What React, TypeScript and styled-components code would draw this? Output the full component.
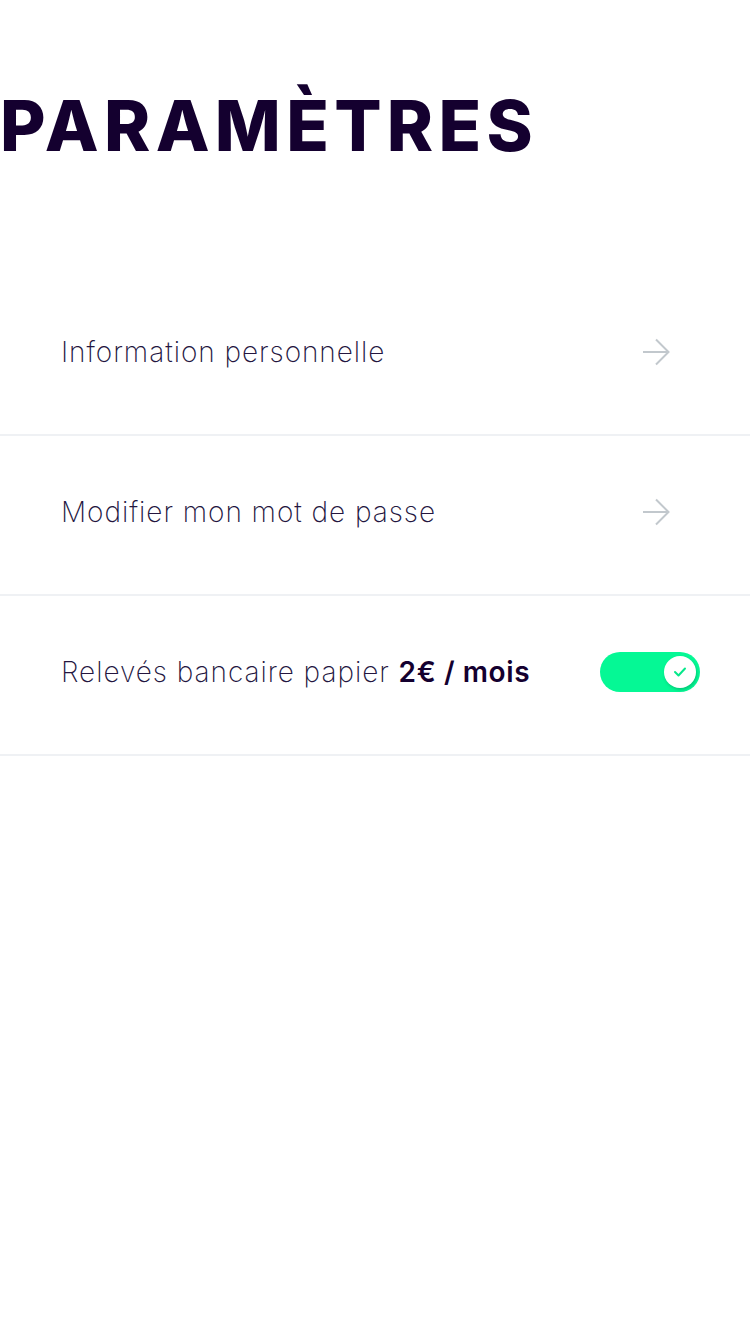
import React from "react";
import styled, { createGlobalStyle } from "styled-components";

const Global = createGlobalStyle`
  html, body { margin: 0; padding: 0; background: #ffffff; }
  body { font-family: Inter, "Noto Sans", sans-serif; }
  * { box-sizing: border-box; }
`;

const Page = styled.div`
  width: 750px;
  min-height: 1334px;
  background: #ffffff;
  display: flex;
  flex-direction: column;
`;

const Title = styled.h1`
  margin: 0;
  padding: 84px 0 0 0;
  height: 276px;
  font-family: Inter, "DejaVu Sans", sans-serif;
  font-weight: 800;
  font-size: 70px;
  line-height: 84px;
  letter-spacing: 5.3px;
  color: #14002f;
`;

const List = styled.ul`
  list-style: none;
  margin: 0;
  padding: 0;
`;

const Row = styled.li`
  height: 160px;
  display: flex;
  align-items: center;
  justify-content: space-between;
  padding: 0 50px 6px 61px;
  border-bottom: 2px solid #eff1f4;
`;

const Label = styled.span`
  font-family: Inter, sans-serif;
  font-weight: 250;
  font-size: 28px;
  letter-spacing: 0.95px;
  color: #24163f;
  strong {
    font-weight: 600;
    letter-spacing: 0.6px;
    color: #14002f;
  }
`;

const ArrowWrap = styled.span`
  display: flex;
  margin-right: 30px;
`;

const Toggle = styled.span`
  width: 100px;
  height: 40px;
  border-radius: 20px;
  background: #05f895;
  position: relative;
  display: inline-block;
`;

const Knob = styled.span`
  position: absolute;
  top: 4px;
  right: 4px;
  width: 32px;
  height: 32px;
  border-radius: 50%;
  background: #ffffff;
  box-shadow: 1px 2px 3px rgba(0, 120, 70, 0.35);
  display: flex;
  align-items: center;
  justify-content: center;
`;

const Arrow = () => (
  <svg width="28" height="28" viewBox="0 0 28 28" fill="none">
    <path d="M1 14 H26 M14 1.5 L26.5 14 L14 26.5" stroke="#c2c8cd" strokeWidth="2" />
  </svg>
);

const Check = () => (
  <svg width="14" height="12" viewBox="0 0 14 12" fill="none">
    <path d="M2 6 L5.5 9.5 L12 2.5" stroke="#05e88a" strokeWidth="2" strokeLinecap="round" strokeLinejoin="round" />
  </svg>
);

export default function App() {
  return (
    <Page>
      <Global />
      <Title>PARAMÈTRES</Title>
      <List>
        <Row>
          <Label>Information personnelle</Label>
          <ArrowWrap><Arrow /></ArrowWrap>
        </Row>
        <Row>
          <Label>Modifier mon mot de passe</Label>
          <ArrowWrap><Arrow /></ArrowWrap>
        </Row>
        <Row>
          <Label>
            Relevés bancaire papier <strong>2€ / mois</strong>
          </Label>
          <Toggle>
            <Knob><Check /></Knob>
          </Toggle>
        </Row>
      </List>
    </Page>
  );
}
